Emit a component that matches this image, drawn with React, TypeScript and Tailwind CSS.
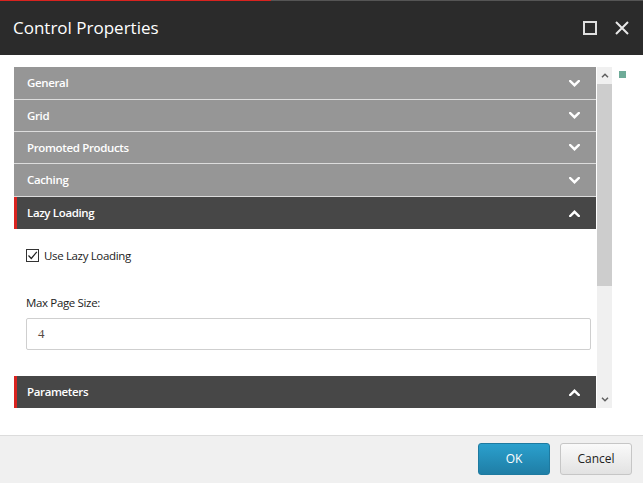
import React from "react";

const Chevron = ({ up }: { up?: boolean }) => (
  <svg width="11" height="7" viewBox="0 0 11 7" className="block">
    <path
      d={up ? "M1.2 6 L5.5 1.8 L9.8 6" : "M1.2 1 L5.5 5.2 L9.8 1"}
      fill="none"
      stroke="#fff"
      strokeWidth="2.4"
      strokeLinecap="square"
    />
  </svg>
);

const SmallChevron = ({ up }: { up?: boolean }) => (
  <svg width="8" height="5" viewBox="0 0 8 5" className="block">
    <path
      d={up ? "M1 4.2 L4 1.2 L7 4.2" : "M1 0.8 L4 3.8 L7 0.8"}
      fill="none"
      stroke="#606060"
      strokeWidth="1.5"
    />
  </svg>
);

const GrayHeader = ({ title, tall }: { title: string; tall?: boolean }) => (
  <div
    className={
      (tall ? "h-[33px] " : "h-[32px] ") +
      "flex items-center justify-between pl-[13px] pr-[16px] bg-[#969696] border-b border-[#dcdcdc] text-white text-[11.5px] font-semibold tracking-[-0.35px]"
    }
  >
    <span>{title}</span>
    <Chevron />
  </div>
);

const DarkHeader = ({ title }: { title: string }) => (
  <div className="h-[32px] flex items-center justify-between pl-[10px] pr-[16px] bg-[#474747] border-l-[3px] border-[#d9231f] text-white text-[11.5px] font-semibold tracking-[-0.35px]">
    <span>{title}</span>
    <Chevron up />
  </div>
);

export default function App() {
  return (
    <div
      className="w-[643px] h-[483px] flex flex-col bg-white overflow-hidden"
      style={{ fontFamily: '"Open Sans", "Noto Sans", sans-serif' }}
    >
      {/* Title bar */}
      <div className="relative h-[55px] bg-[#2b2b2b] flex items-center justify-between pl-[13px] pr-[14px] shrink-0">
        <div className="absolute left-0 top-0 h-[1px] w-full bg-[#555]" />
        <div className="absolute left-0 top-0 h-[1px] w-[271px] bg-[#d9231f]" />
        <span className="text-white text-[17px]">Control Properties</span>
        <div className="flex items-center gap-[18px]">
          <div className="w-[14px] h-[14px] border-2 border-[#e0e0e0]" />
          <svg width="14" height="14" viewBox="0 0 14 14" className="block">
            <path d="M1 1 L13 13 M13 1 L1 13" stroke="#e8e8e8" strokeWidth="2" />
          </svg>
        </div>
      </div>

      {/* Body */}
      <div className="flex-1 flex pt-[12px] pl-[14px]">
        <div className="w-[582px] h-[341px] overflow-hidden flex flex-col">
          <GrayHeader title="General" tall />
          <GrayHeader title="Grid" />
          <GrayHeader title="Promoted Products" />
          <GrayHeader title="Caching" tall />
          <DarkHeader title="Lazy Loading" />
          <div className="pt-[20px] pl-[12px] pr-[5px] pb-[26px] text-[11.5px] text-[#222] tracking-[-0.35px]">
            <label className="flex items-center gap-[5px] h-[13px]">
              <span className="w-[13px] h-[13px] border border-[#333] bg-white flex items-center justify-center">
                <svg width="11" height="11" viewBox="0 0 11 11" className="block">
                  <path d="M1.5 5.5 L4.3 8.5 L9.8 1.8" fill="none" stroke="#222" strokeWidth="1.2" />
                </svg>
              </span>
              <span>Use Lazy Loading</span>
            </label>
            <div className="mt-[33px] leading-[16px]">Max Page Size:</div>
            <div
              className="mt-[7px] h-[32px] border border-[#cfcfcf] rounded-[2px] flex items-center pl-[11px] text-[13px] text-[#5a4a44] tracking-normal"
              style={{ fontFamily: '"Liberation Serif", serif' }}
            >
              4
            </div>
          </div>
          <DarkHeader title="Parameters" />
        </div>

        {/* Scrollbar */}
        <div className="ml-[1px] w-[15px] h-[341px] bg-[#f0f0f0] flex flex-col">
          <div className="h-[17px] flex items-center justify-center">
            <SmallChevron up />
          </div>
          <div className="h-[202px] bg-[#cdcdcd]" />
          <div className="flex-1 flex items-end justify-center pb-[6px]">
            <SmallChevron />
          </div>
        </div>

        <div className="ml-[7px] mt-[4px] w-[7px] h-[7px] bg-[#6eab98]" />
      </div>

      {/* Footer */}
      <div className="h-[48px] shrink-0 border-t border-[#dcdcdc] bg-[#f0f0f0] flex items-start justify-end gap-[10px] pt-[7px] pr-[11px]">
        <button className="w-[72px] h-[32px] rounded-[3px] border border-[#1e7aa0] bg-gradient-to-b from-[#2ba0cd] to-[#1f7ea6] text-white text-[12px]">
          OK
        </button>
        <button className="w-[72px] h-[32px] rounded-[3px] border border-[#c6c6c6] bg-gradient-to-b from-[#fafafa] to-[#e2e2e2] text-[#222] text-[12px]">
          Cancel
        </button>
      </div>
    </div>
  );
}
